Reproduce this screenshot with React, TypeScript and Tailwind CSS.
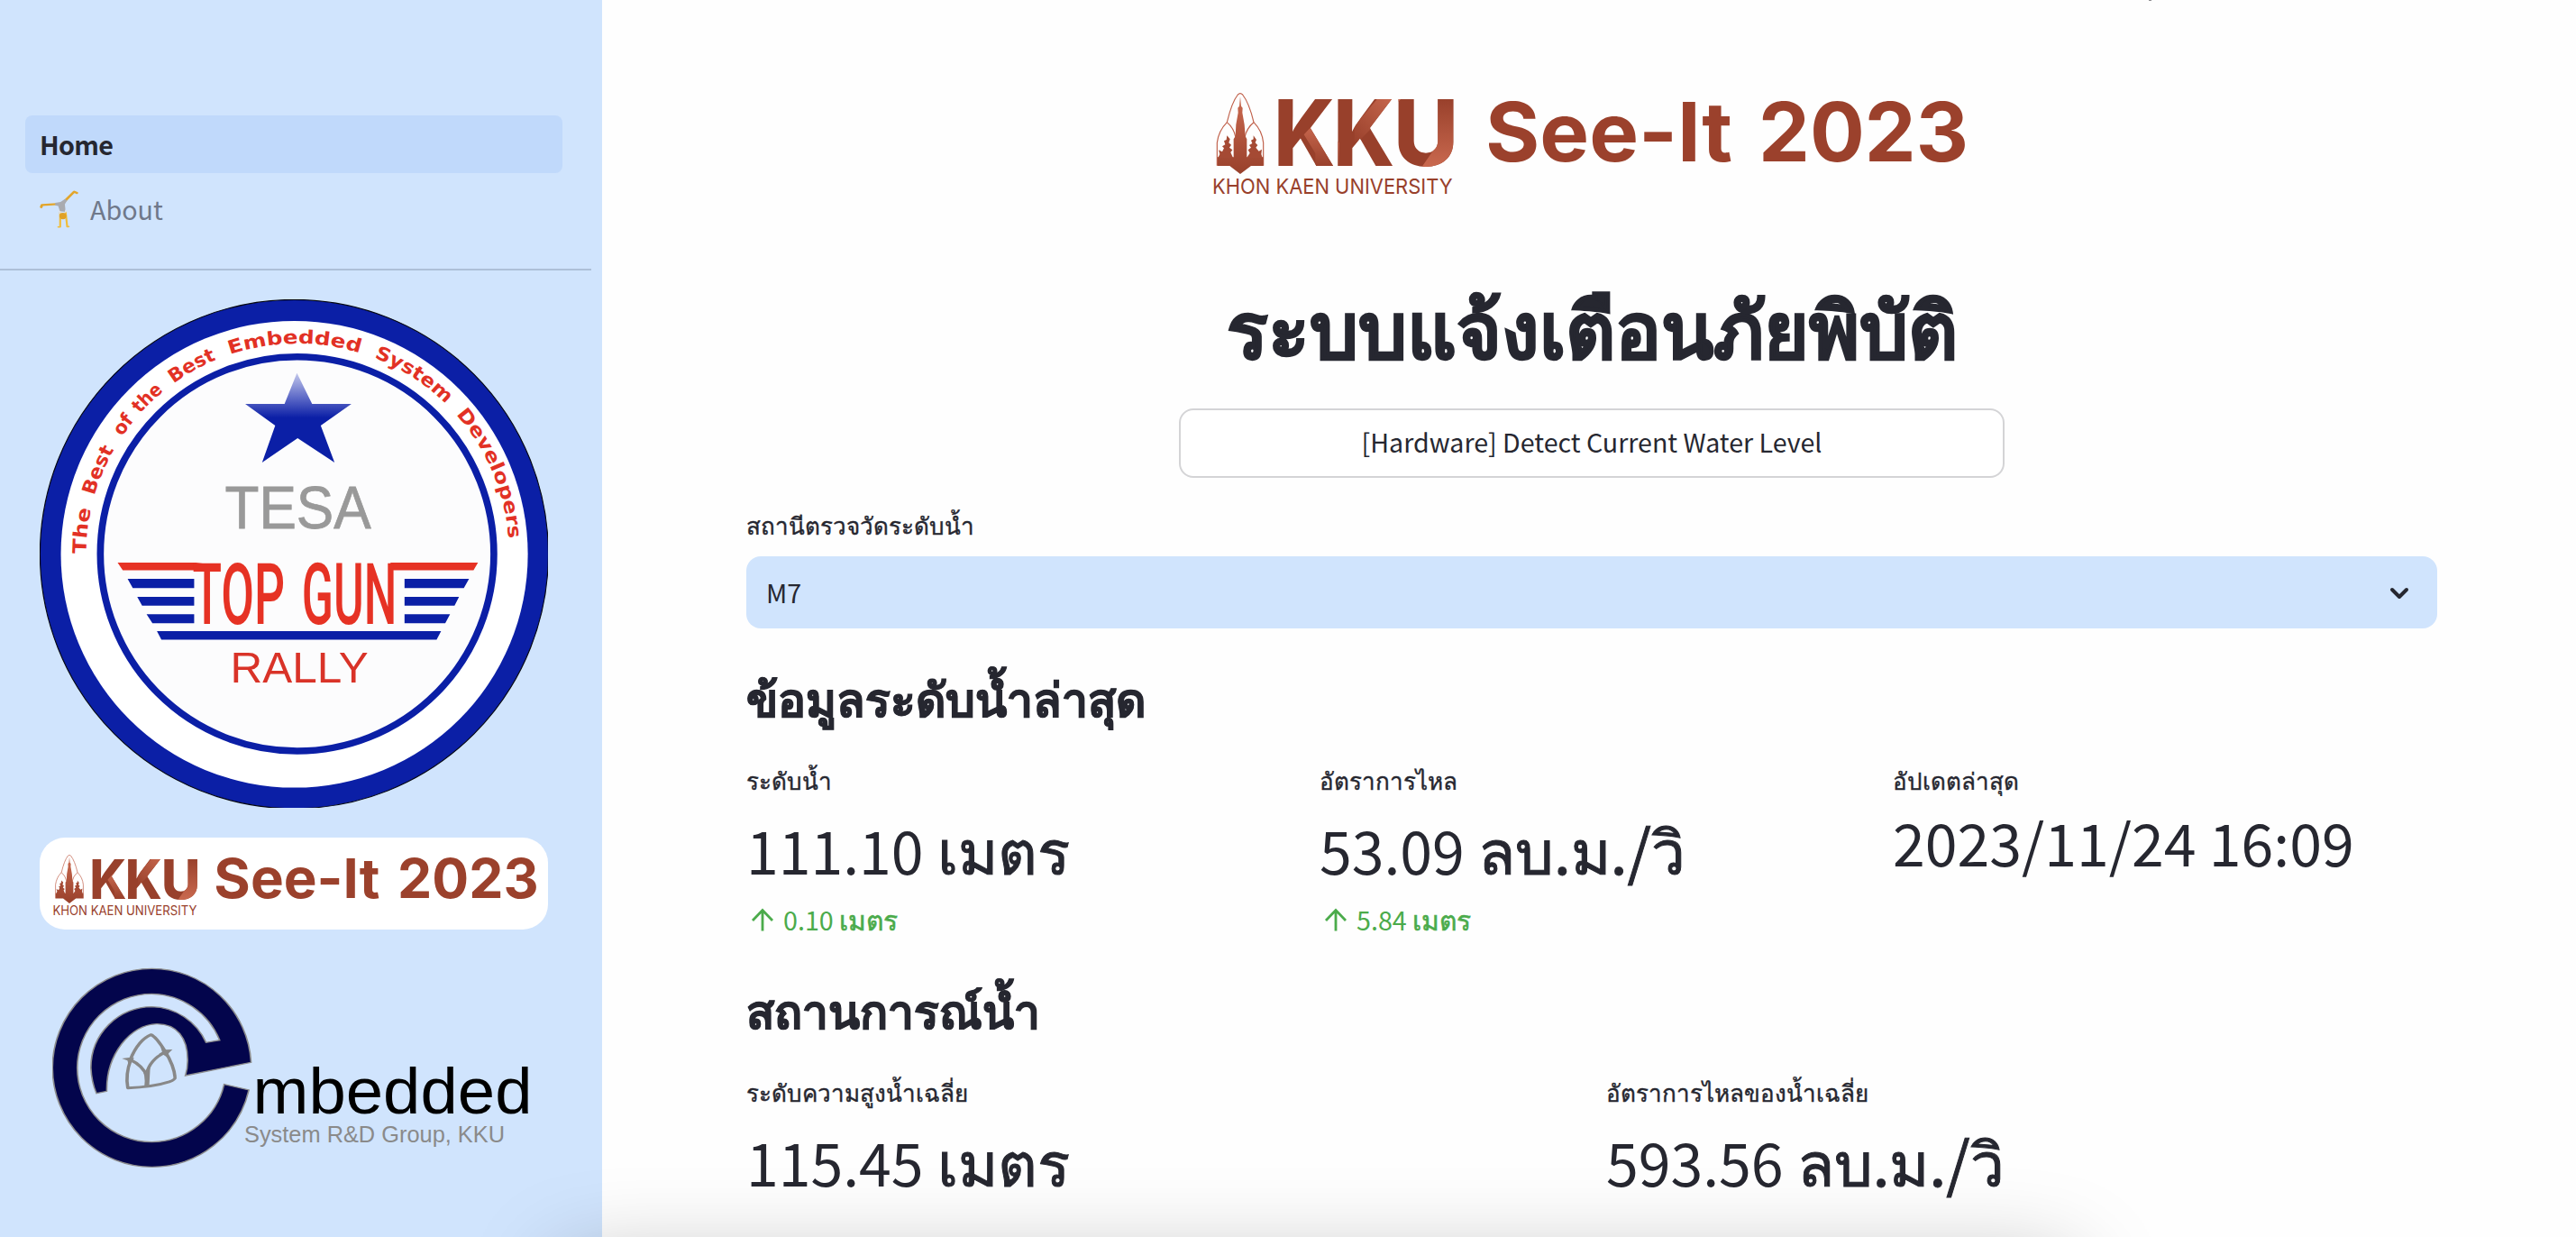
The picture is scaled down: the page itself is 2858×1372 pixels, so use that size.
import { useId } from "react";

function KkuMark({ className }: { className: string }) {
  const id = useId().replace(/[^a-zA-Z0-9]/g, "");
  return (
    <svg viewBox="20 24 802 342" className={className} fontFamily="Inter, sans-serif">
      <defs>
        <linearGradient id={`${id}d`} x1="0" y1="0" x2="0" y2="1">
          <stop offset="0" stopColor="#cb6a50" />
          <stop offset="1" stopColor="#98402b" />
        </linearGradient>
        <linearGradient id={`${id}a`} x1="1" y1="0" x2="0" y2="1">
          <stop offset="0" stopColor="#cb6a50" />
          <stop offset="1" stopColor="#98402b" />
        </linearGradient>
        <linearGradient id={`${id}u`} x1="0" y1="0" x2="0" y2="1">
          <stop offset="0" stopColor="#98402b" />
          <stop offset="1" stopColor="#cb6a50" />
        </linearGradient>
        <clipPath id={`${id}c`} style={{ fontSize: 305, fontWeight: 800 }}>
          <text x="222" y="268" textLength="204" lengthAdjust="spacingAndGlyphs">K</text>
          <text x="420" y="268" textLength="204" lengthAdjust="spacingAndGlyphs">K</text>
          <text x="620" y="268" textLength="216" lengthAdjust="spacingAndGlyphs">U</text>
        </clipPath>
      </defs>
      {/* stupa emblem */}
      <g fill="none" stroke="#c0604a" strokeWidth="3.5">
        <path d="M66 122Q82 55 102 30Q110 22 118 30Q140 58 155 122" />
        <path d="M33 266V190Q38 150 66 122Q88 140 95 172" />
        <path d="M187 266V190Q183 150 155 122Q132 140 125 172" />
      </g>
      <path
        fill={`url(#${id}d)`}
        d="M110 36L113 68L118 74L117 90L124 130L127 168L132 178V238H187V267H146L110 294L75 267H34V238H88V178L94 168L96 130L103 90L102 74L107 68Z"
      />
      <path
        fill="#a54a34"
        d="M66 166L76 178L72 190L80 197L74 206L84 214L78 222L86 240H36L42 228L38 214L50 220L56 208L50 202L60 196L56 184L64 180ZM154 166L164 180L160 190L168 198L162 206L172 218L182 212L180 228L184 240H132L142 224L136 214L146 206L140 198L150 192L146 182L154 178Z"
      />
      <g fontSize="305" fontWeight="800" fill="#98402b">
        <text x="222" y="268" textLength="204" lengthAdjust="spacingAndGlyphs">K</text>
        <text x="420" y="268" textLength="204" lengthAdjust="spacingAndGlyphs">K</text>
        <text x="620" y="268" textLength="216" lengthAdjust="spacingAndGlyphs">U</text>
      </g>
      <g clipPath={`url(#${id}c)`}>
        <path fill={`url(#${id}d)`} d="M322 163L360 122L440 190V270H360V225Z" />
        <path fill={`url(#${id}a)`} d="M490 134L570 40H650L524 165L490 200Z" />
        <path fill={`url(#${id}u)`} d="M708 280L760 205V40H830V280Z" />
      </g>
      <text x="17" y="359" fontSize="70" fill="#98402b" textLength="800" lengthAdjust="spacingAndGlyphs">
        KHON KAEN UNIVERSITY
      </text>
    </svg>
  );
}

function Wordmark({ className }: { className: string }) {
  return (
    <svg viewBox="352 50 531 72" className={className} fontFamily="Inter, sans-serif" fontWeight="700" fontSize="91" fill="#9b412c">
      <text x="348" y="118.6" textLength="274" lengthAdjust="spacingAndGlyphs">See-It</text>
      <text x="651" y="118.6" textLength="233" lengthAdjust="spacingAndGlyphs">2023</text>
    </svg>
  );
}

const arcWords: [string, number, number][] = [
  ["The", 0, 12.4],
  ["Best", 16.1, 29.9],
  ["of", 34, 39.6],
  ["the", 41.9, 50.8],
  ["Best", 54.2, 67.5],
  ["Embedded", 71.4, 107],
  ["System", 111, 134.3],
  ["Developers", 138.3, 175.8],
];

function TopGunBadge() {
  return (
    <svg viewBox="37 32 1474 1499" preserveAspectRatio="none" className="mt-8 ml-11 h-[564px] w-[564px]">
      <defs>
        <linearGradient id="star" x1="0" y1="0" x2="0" y2="1">
          <stop offset="0" stopColor="#c3c8ec" />
          <stop offset="0.3" stopColor="#5562c4" />
          <stop offset="0.5" stopColor="#0b1fa6" />
        </linearGradient>
      </defs>
      <ellipse cx="775" cy="783" rx="737" ry="750" fill="#0b1fa6" stroke="#05070f" strokeWidth="3" />
      <ellipse cx="775.5" cy="783.5" rx="677" ry="688" fill="#fff" />
      <ellipse cx="783.5" cy="782.5" rx="570.5" ry="581" fill="#fcfcfd" stroke="#0b1fa6" strokeWidth="20" />
      <path id="motto" d="M172 782A613 620 0 0 1 1398 782" fill="none" />
      <g fill="#e23125" fontFamily="'DejaVu Sans', sans-serif" fontWeight="700" fontSize="55">
        {arcWords.map(([word, from, to]) => (
          <text key={from}>
            <textPath href="#motto" startOffset={(from / 180) * 1937} textLength={(to - from) * 10.76} lengthAdjust="spacingAndGlyphs">
              {word}
            </textPath>
          </text>
        ))}
      </g>
      <path fill="url(#star)" d="M783 249L827 340H941L852 404L892 513L785 441L682 513L720 404L633 340H747Z" />
      <g fontFamily="'Liberation Sans', Arial, sans-serif">
        <text x="574" y="707" fontSize="176" fill="#999" stroke="#999" strokeWidth="2" textLength="424" lengthAdjust="spacingAndGlyphs">TESA</text>
        <text x="590" y="1161" fontSize="130" fill="#d93328" textLength="400" lengthAdjust="spacingAndGlyphs">RALLY</text>
      </g>
      <g fill="#0b1fa6">
        <path d="M292 856H485V883H307ZM320 909H485V935H334ZM347 960H485V987H364Z" />
        <path d="M1095 856H1282L1267 883H1095ZM1095 909H1253L1240 935H1095ZM1095 960H1227L1213 987H1095Z" />
        <path d="M377 1010H1201L1188 1035H390Z" />
      </g>
      <path fill="#e63224" d="M263 808H490L520 812V831H278ZM1054 808H1308L1295 831H1062Z" />
      <g fill="#e63224" fontFamily="Roboto, sans-serif" fontWeight="500" fontSize="250">
        <text x="480" y="989" textLength="268" lengthAdjust="spacingAndGlyphs">TOP</text>
        <text x="797" y="989" textLength="276" lengthAdjust="spacingAndGlyphs">GUN</text>
      </g>
    </svg>
  );
}

function EmbeddedLogo() {
  return (
    <svg viewBox="28 160 540 230" className="mt-[39px] ml-[58px] h-[230px] w-[540px]" fontFamily="'Liberation Sans', Arial, sans-serif">
      <g transform="scale(0.4095 0.3333)">
        <path
          fill="#03054c"
          stroke="#8c8c8c"
          strokeWidth="4"
          d="M607 805A269 331 0 0 0 338 493A269 331 0 0 0 69 823A269 331 0 0 0 338 1153A269 331 0 0 0 601 897L534 878A202 247 0 0 1 338 1070A202 247 0 0 1 136 823A202 247 0 0 1 338 577A202 247 0 0 1 522 731L485 739A165 203 0 0 0 338 620A165 203 0 0 0 173 823Q175 872 188 908L216 901C214 780 280 678 352 677C405 677 436 722 435 800Q435 825 429 849Z"
        />
        <g fill="none" stroke="#888" strokeWidth="9" strokeLinejoin="round">
          <path d="M280 795Q302 730 336 713Q350 720 374 768Q398 815 401 855Q402 862 385 870Q340 888 273 890Q266 845 281 797Q312 815 325 850V886" />
          <path d="M323 845Q333 795 374 772" />
        </g>
        <path fill="#888" d="M257 792L276 789L290 790L286 800L276 815L272 799ZM362 754L374 763L394 762L384 774L380 788L370 780L356 778L366 770Z" />
        <path fill="#888" d="M308 818L325 840L334 815L331 884H318Q322 845 308 818Z" />
      </g>
      <text x="250.5" y="325.3" fontSize="72" textLength="310" lengthAdjust="spacingAndGlyphs">mbedded</text>
      <text x="241" y="357.3" fontSize="25.5" fill="#8a8a8a" textLength="289" lengthAdjust="spacingAndGlyphs">
        System R&amp;D Group, KKU
      </text>
    </svg>
  );
}

function Cartwheel() {
  return (
    <svg viewBox="106 328 100 134" preserveAspectRatio="none" className="mr-[13px] h-[44px] w-[43px]" fill="none" strokeLinecap="round" strokeLinejoin="round">
      <path stroke="#e2a52b" strokeWidth="7" d="M172 366L195 336L202 340M150 378L112 381L110 388" />
      <path stroke="#f0bd3a" strokeWidth="5" d="M159 405V455H154M173 405L177 454H181" />
      <path fill="#a9abb0" d="M146 374L160 371L171 361L177 365L171 378L173 404L158 402L154 384L146 382Z" />
      <path fill="#dfe1e6" d="M154 396L162 405L158 412ZM172 396L176 404L170 408Z" />
      <ellipse cx="166" cy="418" rx="9" ry="11" fill="#e0a126" />
    </svg>
  );
}

type MetricProps = { label: string; value: string; unit?: string; delta?: string; deltaUnit?: string; className?: string };

function Metric({ label, value, unit, delta, deltaUnit, className = "mt-[13px]" }: MetricProps) {
  return (
    <div className="whitespace-nowrap">
      <div className="-mt-0.5 text-[26px] leading-[48px] [-webkit-text-stroke:0.4px_#262730]">{label}</div>
      <div className={`text-[64.4px] leading-[80px] ${className}`}>
        {value}
        {unit && <span className="text-[67.5px] leading-none [-webkit-text-stroke:1px_#262730]"> {unit}</span>}
      </div>
      {delta && (
        <div className="mt-4 flex h-[44px] items-center text-[28.7px] leading-[44px] text-[#4bab4b]">
          <svg viewBox="0 0 24 24" className="mx-1.5 h-6 w-6 overflow-visible" fill="none" stroke="currentColor" strokeWidth="2.8">
            <path d="M12 24.5V1.5M1 13L12 1.5L23 13" />
          </svg>
          <span className="ml-[5px]">
            {delta}
            <span className="text-[30px] leading-none [-webkit-text-stroke:0.6px_#4bab4b]"> {deltaUnit}</span>
          </span>
        </div>
      )}
    </div>
  );
}

export default function App() {
  return (
    <div className="relative flex h-[1372px] w-[2858px] overflow-hidden bg-[#fefefe] font-['Noto_Sans_CJK_SC',sans-serif] text-[#262730]">
      <aside className="flex h-full w-[668px] shrink-0 flex-col bg-[#d0e4fd] pt-32">
        <nav className="flex flex-col gap-2 pl-7 text-[28.7px]">
          <a className="flex h-16 w-[596px] items-center rounded-lg bg-[#c0d9fb] px-4 font-bold tracking-[-0.025em]">Home</a>
          <a className="flex h-16 w-[596px] items-center px-4 text-[#6f788a]">
            <Cartwheel />
            About
          </a>
        </nav>
        <hr className="mt-[34px] h-[2px] w-[656px] border-0 bg-[#adc0d8]" />
        <TopGunBadge />
        <div className="mt-[33px] ml-11 flex h-[102px] w-[564px] gap-[21px] rounded-[28px] bg-white pt-[19px] pl-[15px]">
          <KkuMark className="h-[68.4px] w-[160.4px]" />
          <Wordmark className="mt-[2px] h-[48.4px] w-[357px]" />
        </div>
        <EmbeddedLogo />
      </aside>

      <main className="flex w-[2036px] flex-col pl-40">
        <div className="mt-[103px] flex h-[114px] justify-center gap-[39px] pr-[3px]">
          <KkuMark className="h-[114px] w-[267.3px]" />
          <Wordmark className="mt-[7px] h-[72px] w-[531px]" />
        </div>
        <h1 className="mt-[93px] text-center text-[85.2px] leading-[100px] font-bold whitespace-nowrap [-webkit-text-stroke:1.6px_#262730]">
          ระบบแจ้งเตือนภัยพิบัติ
        </h1>
        <button className="mt-[43px] flex h-[77px] w-[916px] items-center justify-center self-center rounded-2xl border-2 border-[#d4d4d6] bg-white pb-[3px] text-[28.6px]">
          [Hardware] Detect Current Water Level
        </button>
        <label className="mt-[28px] text-[26px] leading-[48px] [-webkit-text-stroke:0.4px_#262730]">สถานีตรวจวัดระดับน้ำ</label>
        <div className="mt-[11px] flex h-20 items-center justify-between rounded-2xl bg-[#d0e4fd] pr-8 pl-[22px] text-[28.7px]">
          <span>M7</span>
          <svg viewBox="0 0 20 12" className="mt-0.5 h-3 w-5 overflow-visible" fill="none" stroke="#262730" strokeWidth="4" strokeLinecap="round" strokeLinejoin="round">
            <path d="M2 2L10 10L18 2" />
          </svg>
        </div>

        <h3 className="mt-11 text-[51.5px] leading-[64px] font-bold [-webkit-text-stroke:1px_#262730]">ข้อมูลระดับน้ำล่าสุด</h3>
        <section className="mt-[38px] grid h-[199px] grid-cols-3 gap-8">
          <Metric label="ระดับน้ำ" value="111.10" unit="เมตร" delta="0.10" deltaUnit="เมตร" />
          <Metric label="อัตราการไหล" value="53.09" unit="ลบ.ม./วิ" delta="5.84" deltaUnit="เมตร" />
          <Metric label="อัปเดตล่าสุด" value="2023/11/24 16:09" className="mt-1" />
        </section>

        <h3 className="mt-[45px] text-[51.3px] leading-[64px] font-bold [-webkit-text-stroke:1px_#262730]">สถานการณ์น้ำ</h3>
        <section className="mt-[38px] grid grid-cols-2 gap-8">
          <Metric label="ระดับความสูงน้ำเฉลี่ย" value="115.45" unit="เมตร" />
          <Metric label="อัตราการไหลของน้ำเฉลี่ย" value="593.56" unit="ลบ.ม./วิ" />
        </section>
      </main>

      {/* sliver at the top edge and soft shadow rising from below the viewport */}
      <div className="pointer-events-none absolute top-0 left-[2384px] h-px w-[3px] bg-[#8f8f92]" />
      <div className="pointer-events-none absolute -bottom-[128px] left-[620px] h-[100px] w-[1680px] shadow-[0_0_100px_rgba(0,0,0,0.27)]" />
    </div>
  );
}
